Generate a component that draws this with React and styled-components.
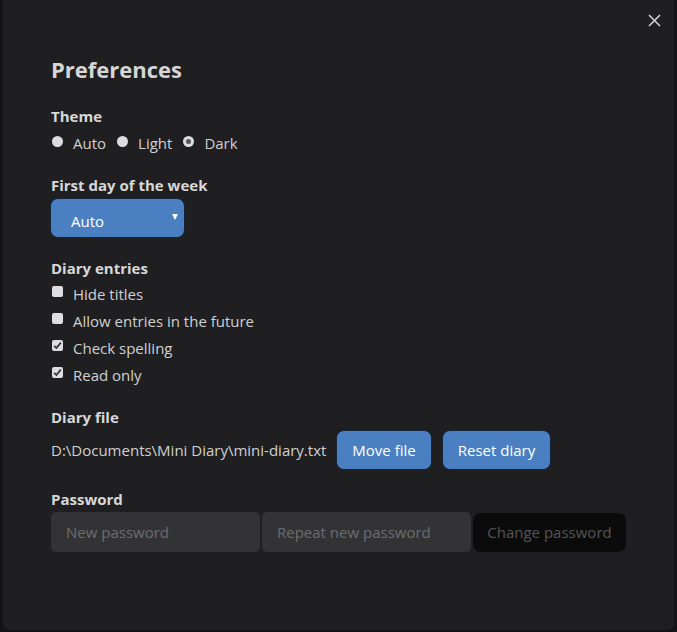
import React from 'react';
import styled, { createGlobalStyle } from 'styled-components';

const Global = createGlobalStyle`
  html, body {
    margin: 0;
    padding: 0;
    background: #141416;
  }
  body {
    font-family: "Open Sans", "Noto Sans", sans-serif;
  }
`;

const Overlay = styled.div`
  width: 677px;
  height: 632px;
  padding: 0 3px 2px 3px;
  box-sizing: border-box;
`;

const Modal = styled.div`
  position: relative;
  height: 100%;
  background: #1f1f22;
  border-radius: 0 0 6px 6px;
  padding: 54px 48px 0 48px;
  box-sizing: border-box;
  color: #cfcfcf;
`;

const Close = styled.button`
  position: absolute;
  top: 12px;
  right: 12px;
  width: 16px;
  height: 16px;
  padding: 0;
  border: none;
  background: none;
  display: flex;
  align-items: center;
  justify-content: center;
  cursor: pointer;
`;

const Title = styled.h1`
  margin: 0;
  font-size: 22px;
  line-height: 30px;
  font-weight: 700;
  color: #d6d6d6;
`;

const Section = styled.section`
  margin-top: ${p => p.$gap || 19}px;
`;

const Label = styled.div`
  font-size: 15px;
  line-height: 22px;
  font-weight: 700;
  color: #d8d8d8;
  margin-bottom: ${p => p.$space || 2}px;
`;

const Row = styled.div`
  display: flex;
  align-items: center;
  gap: ${p => p.$gap || 0}px;
`;

const Option = styled.label`
  display: flex;
  align-items: center;
  height: ${p => p.$h || 22}px;
  font-size: 15px;
  color: #d0d0d0;
  margin-right: ${p => p.$mr || 0}px;
`;

const Radio = styled.span`
  width: 11px;
  height: 11px;
  border-radius: 50%;
  background: #dcdcdc;
  margin: 0 10px 4px 1px;
  display: flex;
  align-items: center;
  justify-content: center;
  flex-shrink: 0;
  &::after {
    content: '';
    width: 5px;
    height: 5px;
    border-radius: 50%;
    background: ${p => (p.$checked ? '#555' : 'transparent')};
  }
`;

const Check = styled.span`
  width: 11px;
  height: 11px;
  border-radius: 2px;
  background: #dedede;
  margin: 0 10px 4px 1px;
  display: flex;
  align-items: center;
  justify-content: center;
  flex-shrink: 0;
`;

const Select = styled.div`
  position: relative;
  width: 135px;
  height: 40px;
  box-sizing: border-box;
  margin-left: -1px;
  background: #4a7fc1;
  border: 1px solid #16243a;
  border-radius: 8px;
  color: #fff;
  font-size: 15px;
  padding: 12px 0 0 20px;
  &::after {
    content: '';
    position: absolute;
    right: 6px;
    top: 15px;
    border-left: 3.5px solid transparent;
    border-right: 3.5px solid transparent;
    border-top: 6px solid #fff;
  }
`;

const Path = styled.span`
  font-size: 15px;
  color: #d0d0d0;
`;

const Button = styled.button`
  height: 40px;
  padding: 0 15px;
  border: 1px solid #16243a;
  border-radius: 8px;
  background: #4a7fc1;
  color: #fff;
  font-family: inherit;
  font-size: 15px;
`;

const Input = styled.input`
  width: 209px;
  height: 40px;
  box-sizing: border-box;
  border: none;
  border-radius: 5px;
  background: #333336;
  padding: 0 15px;
  font-family: inherit;
  font-size: 15px;
  color: #ccc;
  margin-right: 2px;
  outline: none;
  &::placeholder {
    color: #6c6c70;
  }
`;

const DarkButton = styled.button`
  height: 39px;
  width: 156px;
  border: none;
  border-radius: 8px;
  background: #0b0b0c;
  color: #555558;
  font-family: inherit;
  font-size: 15px;
`;

const CheckMark = () => (
  <svg width="9" height="9" viewBox="0 0 9 9">
    <path d="M1.2 4.8 L3.4 7 L7.8 1.6" fill="none" stroke="#333" strokeWidth="1.7" />
  </svg>
);

export default function App() {
  const entries = [
    ['Hide titles', false],
    ['Allow entries in the future', false],
    ['Check spelling', true],
    ['Read only', true],
  ];
  return (
    <Overlay>
      <Global />
      <Modal>
        <Close aria-label="Close">
          <svg width="13" height="13" viewBox="0 0 13 13">
            <path d="M1 1 L12 12 M12 1 L1 12" stroke="#d0d0d0" strokeWidth="1.6" />
          </svg>
        </Close>
        <Title>Preferences</Title>

        <Section $gap={21}>
          <Label $space={5}>Theme</Label>
          <Row>
            <Option $mr={10}><Radio />Auto</Option>
            <Option $mr={10}><Radio />Light</Option>
            <Option><Radio $checked />Dark</Option>
          </Row>
        </Section>

        <Section $gap={20}>
          <Label>First day of the week</Label>
          <Select>Auto</Select>
        </Section>

        <Section $gap={19}>
          <Label $space={1}>Diary entries</Label>
          {entries.map(([text, on]) => (
            <Option key={text} $h={27}>
              <Check>{on && <CheckMark />}</Check>
              {text}
            </Option>
          ))}
        </Section>

        <Section $gap={18}>
          <Label>Diary file</Label>
          <Row $gap={10}>
            <Path>D:\Documents\Mini Diary\mini-diary.txt</Path>
            <Button>Move file</Button>
            <Button>Reset diary</Button>
          </Row>
        </Section>

        <Section $gap={18}>
          <Label>Password</Label>
          <Row>
            <Input placeholder="New password" />
            <Input placeholder="Repeat new password" />
            <DarkButton>Change password</DarkButton>
          </Row>
        </Section>
      </Modal>
    </Overlay>
  );
}
